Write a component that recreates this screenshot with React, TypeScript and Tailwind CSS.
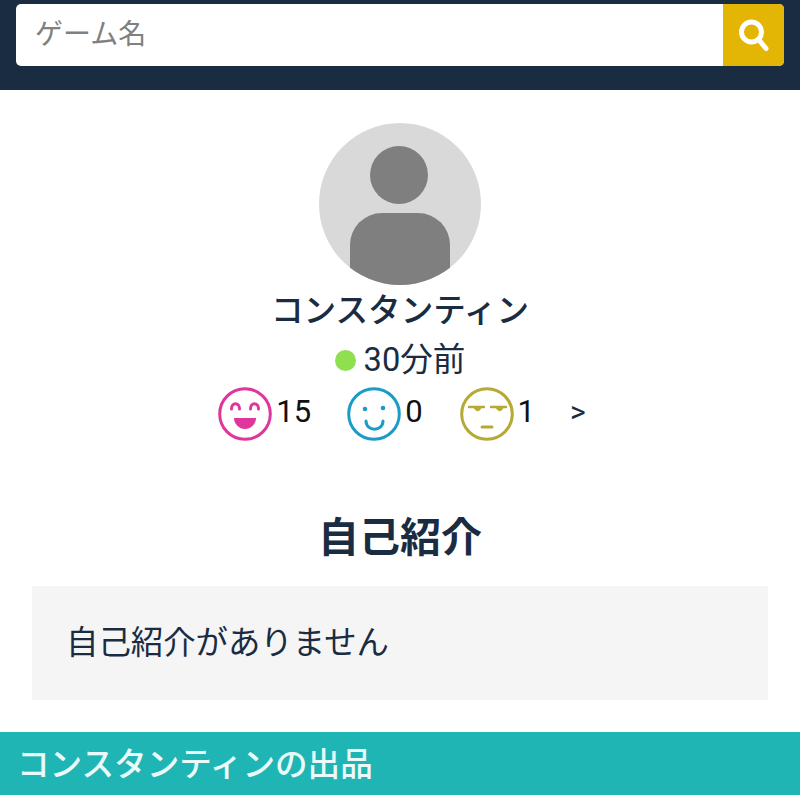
const cjk = "font-['Roboto','Noto_Sans_CJK_JP',sans-serif]";

function Grin() {
  return (
    <svg width="54" height="54" viewBox="0 0 54 54" fill="none" stroke="#e0359b" strokeWidth="3" strokeLinecap="round">
      <circle cx="27" cy="27" r="25.3" />
      <path d="M13.5 22c0-7 8-7 8 0" />
      <path d="M32.5 22c0-7 8-7 8 0" />
      <path d="M16 31h22c0 6-5 11-11 11s-11-5-11-11z" fill="#e0359b" stroke="none" />
    </svg>
  );
}

function Smile() {
  return (
    <svg width="54" height="54" viewBox="0 0 54 54" fill="none" stroke="#1b9cc6" strokeWidth="3" strokeLinecap="round">
      <circle cx="27" cy="27" r="25.3" />
      <circle cx="18" cy="22" r="2.3" fill="#1b9cc6" stroke="none" />
      <circle cx="36" cy="21" r="2.3" fill="#1b9cc6" stroke="none" />
      <path d="M19 34c0 11 17 11 17 0" />
    </svg>
  );
}

function Meh() {
  return (
    <svg width="54" height="54" viewBox="0 0 54 54" fill="none" stroke="#b5aa35" strokeWidth="3" strokeLinecap="round">
      <circle cx="27" cy="27" r="25.3" />
      <path d="M9 20h15" strokeWidth="2.4" />
      <path d="M31 20h15" strokeWidth="2.4" />
      <path d="M14 20h7c-.5 5-6 5-7 0z" fill="#b5aa35" strokeWidth="1" />
      <path d="M36 20h7c-.5 5-6 5-7 0z" fill="#b5aa35" strokeWidth="1" />
      <path d="M22 40h10" />
    </svg>
  );
}

export default function App() {
  return (
    <div className={`w-[800px] h-[795px] overflow-hidden bg-white text-[#1a2c42] ${cjk}`}>
      <header className="h-[90px] bg-[#1a2c42] pt-1 pl-4 pr-4">
        <div className="flex h-[62px] w-[768px] rounded-[5px] overflow-hidden bg-white">
          <div className="flex-1 pl-[19px] flex items-center text-[28px] text-[#808080]">ゲーム名</div>
          <div className="w-[61px] bg-[#e3b505] flex items-center justify-center">
            <svg width="32" height="34" viewBox="0 0 32 34" fill="none" stroke="#fff" strokeLinecap="round">
              <circle cx="13.5" cy="14" r="10" strokeWidth="5" />
              <path d="M21 22l7 8.5" strokeWidth="5" />
            </svg>
          </div>
        </div>
      </header>

      <section className="flex flex-col items-center pt-[33px]">
        <div className="relative w-[162px] h-[162px] rounded-full bg-[#d9d9d9] overflow-hidden">
          <div className="absolute left-[51px] top-[23px] w-[58px] h-[58px] rounded-full bg-[#7f7f7f]" />
          <div className="absolute left-[31px] top-[90px] w-[100px] h-[90px] rounded-t-[32px] bg-[#7f7f7f]" />
        </div>
        <h1 className="text-[32.6px] leading-[52px] font-medium">コンスタンティン</h1>
        <div className="flex items-center h-[48px] text-[32.6px] text-[#1a2c42] -mt-[1px]">
          <span className="w-[21px] h-[21px] rounded-full bg-[#8fe04e] mr-[8px]" />
          <span>30分前</span>
        </div>
        <div className="flex items-start h-[54px] mt-[3px] pl-[4px] text-[31px] leading-[50px] text-[#111]">
          <Grin />
          <span className="ml-[4px]">15</span>
          <span className="ml-[36px]"><Smile /></span>
          <span className="ml-[4px]">0</span>
          <span className="ml-[37px]"><Meh /></span>
          <span className="ml-[4px]">1</span>
          <span className="ml-[35px] text-[30px] leading-[50px] text-[#1a2c42]">&gt;</span>
        </div>
      </section>

      <h2 className="text-center text-[41px] leading-[60px] font-bold mt-[67px]">自己紹介</h2>
      <div className="mx-8 mt-[18px] h-[114px] bg-[#f5f5f6] pl-[34px] pt-[1px] flex items-center text-[32.4px] text-[#1a2c42]">
        自己紹介がありません
      </div>
      <div className="mt-8 h-[63px] bg-[#20b5b5] pl-[17px] pt-[3px] flex items-center text-[32.6px] font-medium text-[#eafafa]">
        コンスタンティンの出品
      </div>
    </div>
  );
}
